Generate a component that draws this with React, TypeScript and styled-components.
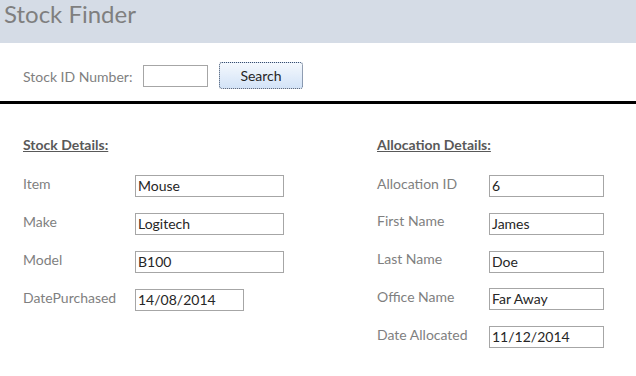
import React from "react";
import styled, { createGlobalStyle } from "styled-components";

const Global = createGlobalStyle`
  html, body { margin: 0; padding: 0; background: #ffffff; }
  body { font-family: Lato, "Open Sans", Arial, sans-serif; }
`;

const Page = styled.div`
  width: 636px;
  height: 376px;
  display: flex;
  flex-direction: column;
  background: #ffffff;
`;

const Header = styled.header`
  height: 43px;
  background: #d5dce6;
  display: flex;
  align-items: center;
  padding-left: 4px;
  box-sizing: border-box;
`;

const Title = styled.h1`
  margin: 0;
  font-family: Lato, sans-serif;
  font-weight: 400;
  font-size: 24px;
  color: #7f7f7f;
  line-height: 1;
  margin-top: -15px;
`;

const SearchBar = styled.div`
  height: 58px;
  box-sizing: border-box;
  padding-top: 8px;
  display: flex;
  align-items: center;
  padding-left: 23px;
  border-bottom: 3px solid #000000;
  box-sizing: content-box;
  height: 50px;
`;

const SearchLabel = styled.span`
  font-size: 14px;
  color: #7f7f7f;
  width: 120px;
`;

const SearchInput = styled.div`
  width: 63px;
  height: 20px;
  border: 1px solid #a6a6a6;
  background: #fff;
`;

const SearchButton = styled.button`
  margin-left: 11px;
  width: 84px;
  height: 27px;
  border: 1px dotted #3a4d6a;
  border-radius: 3px;
  background: linear-gradient(#f4f8fd, #d3e3f7);
  font-family: Lato, sans-serif;
  font-size: 14px;
  color: #262626;
  padding: 0;
  margin-top: -1px;
`;

const Content = styled.div`
  display: flex;
  padding-left: 23px;
  padding-top: 33px;
`;

const Section = styled.section<{ $width: number }>`
  width: ${(p) => p.$width}px;
  display: flex;
  flex-direction: column;
`;

const Heading = styled.h2`
  margin: 0 0 22px 0;
  font-size: 14px;
  font-weight: 700;
  color: #595959;
  text-decoration: underline;
  line-height: 16px;
`;

const Fields = styled.div<{ $gap: number }>`
  display: grid;
  grid-template-columns: 112px auto;
  row-gap: ${(p) => p.$gap}px;
  align-items: center;
`;

const Label = styled.span`
  font-size: 14px;
  color: #7f7f7f;
  margin-top: -6px;
`;

const Box = styled.div<{ $w: number }>`
  width: ${(p) => p.$w}px;
  height: 22px;
  border: 1px solid #a6a6a6;
  box-sizing: border-box;
  font-size: 14px;
  line-height: 20px;
  color: #262626;
  padding-left: 2px;
`;

const stock = [
  { label: "Item", value: "Mouse", w: 149 },
  { label: "Make", value: "Logitech", w: 149 },
  { label: "Model", value: "B100", w: 149 },
  { label: "DatePurchased", value: "14/08/2014", w: 109 },
];

const allocation = [
  { label: "Allocation ID", value: "6" },
  { label: "First Name", value: "James" },
  { label: "Last Name", value: "Doe" },
  { label: "Office Name", value: "Far Away" },
  { label: "Date Allocated", value: "11/12/2014" },
];

export default function App() {
  return (
    <Page>
      <Global />
      <Header>
        <Title>Stock Finder</Title>
      </Header>
      <SearchBar>
        <SearchLabel>Stock ID Number:</SearchLabel>
        <SearchInput />
        <SearchButton>Search</SearchButton>
      </SearchBar>
      <Content>
        <Section $width={354}>
          <Heading>Stock Details:</Heading>
          <Fields $gap={16}>
            {stock.map((f) => (
              <React.Fragment key={f.label}>
                <Label>{f.label}</Label>
                <Box $w={f.w}>{f.value}</Box>
              </React.Fragment>
            ))}
          </Fields>
        </Section>
        <Section $width={240}>
          <Heading>Allocation Details:</Heading>
          <Fields $gap={15.75}>
            {allocation.map((f) => (
              <React.Fragment key={f.label}>
                <Label>{f.label}</Label>
                <Box $w={115}>{f.value}</Box>
              </React.Fragment>
            ))}
          </Fields>
        </Section>
      </Content>
    </Page>
  );
}
